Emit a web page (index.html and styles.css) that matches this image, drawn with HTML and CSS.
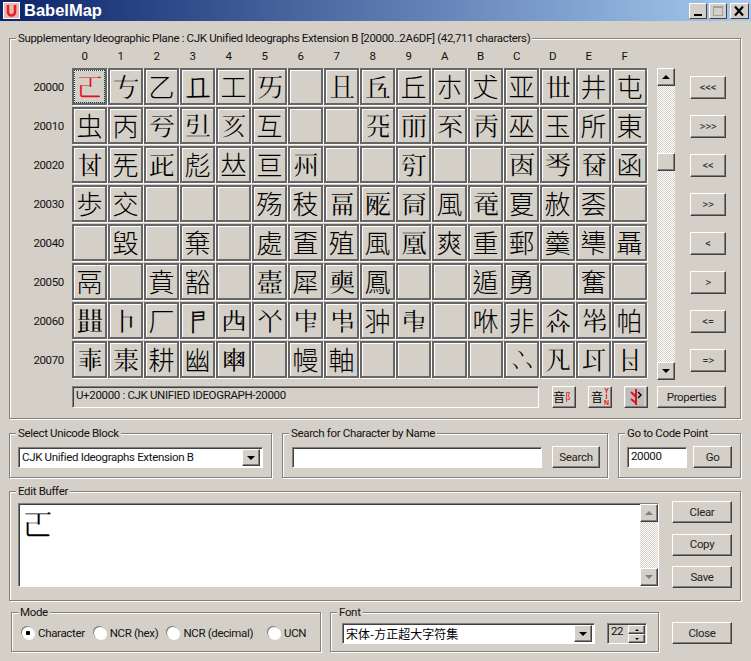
FILE: index.html
```html
<!DOCTYPE html>
<html lang="en">
<head>
<meta charset="utf-8">
<title>BabelMap</title>
<link rel="stylesheet" href="styles.css">
</head>
<body>
<div class="window">
  <header class="titlebar">
    <svg class="app-icon" viewBox="0 0 17 17"><rect x=".5" y=".5" width="16" height="16" fill="#e8b8b0" stroke="#fff"/><path d="M5 3v7a3.5 3.5 0 0 0 7 0V3" fill="none" stroke="#e0202a" stroke-width="2.6"/></svg>
    <span class="app-name">BabelMap</span>
    <div class="caption-buttons">
      <span class="cap-btn"><svg viewBox="0 0 18 16"><rect x="5" y="11" width="8" height="2" fill="#000"/></svg></span>
      <span class="cap-btn"><svg viewBox="0 0 18 16"><rect x="4.5" y="3.5" width="9" height="9" fill="none" stroke="#a0a0a0"/><rect x="5" y="4" width="8" height="1" fill="#a0a0a0"/></svg></span>
      <span class="cap-btn cap-close"><svg viewBox="0 0 18 16"><path d="M5 3.5l8 9M13 3.5l-8 9" stroke="#000" stroke-width="2.2"/></svg></span>
    </div>
  </header>

  <main class="content">
    <section class="group plane">
      <span class="group-title">Supplementary Ideographic Plane : CJK Unified Ideographs Extension B [20000..2A6DF] (42,711 characters)</span>
      <div class="plane-main">
        <div class="map">
          <span></span><span class="col">0</span><span class="col">1</span><span class="col">2</span><span class="col">3</span><span class="col">4</span><span class="col">5</span><span class="col">6</span><span class="col">7</span><span class="col">8</span><span class="col">9</span><span class="col">A</span><span class="col">B</span><span class="col">C</span><span class="col">D</span><span class="col">E</span><span class="col">F</span>

          <span class="row-label">20000</span>
          <div class="cell selected">&#x20000;</div><div class="cell">&#x20001;</div><div class="cell">乙</div><div class="cell">&#x20003;</div><div class="cell">工</div><div class="cell">&#x20005;</div><div class="cell"></div><div class="cell">&#x20007;</div><div class="cell">&#x20008;</div><div class="cell">丘</div><div class="cell">朩</div><div class="cell">&#x2000B;</div><div class="cell">亚</div><div class="cell">&#x2000D;</div><div class="cell">井</div><div class="cell">屯</div>

          <span class="row-label">20010</span>
          <div class="cell">虫</div><div class="cell">丙</div><div class="cell">&#x20012;</div><div class="cell">&#x20013;</div><div class="cell">&#x20014;</div><div class="cell">互</div><div class="cell"></div><div class="cell"></div><div class="cell">&#x20018;</div><div class="cell">&#x20019;</div><div class="cell">&#x2001A;</div><div class="cell">&#x2001B;</div><div class="cell">巫</div><div class="cell">玉</div><div class="cell">所</div><div class="cell">東</div>

          <span class="row-label">20020</span>
          <div class="cell">&#x20020;</div><div class="cell">&#x20021;</div><div class="cell">&#x20022;</div><div class="cell">彪</div><div class="cell">&#x20024;</div><div class="cell">亘</div><div class="cell">&#x20026;</div><div class="cell"></div><div class="cell"></div><div class="cell">&#x20029;</div><div class="cell"></div><div class="cell"></div><div class="cell">&#x2002C;</div><div class="cell">&#x2002D;</div><div class="cell">&#x2002E;</div><div class="cell">函</div>

          <span class="row-label">20030</span>
          <div class="cell">歩</div><div class="cell">交</div><div class="cell"></div><div class="cell"></div><div class="cell"></div><div class="cell">殇</div><div class="cell">秓</div><div class="cell">&#x20037;</div><div class="cell">&#x20038;</div><div class="cell">&#x20039;</div><div class="cell">風</div><div class="cell">&#x2003B;</div><div class="cell">夏</div><div class="cell">赦</div><div class="cell">&#x2003E;</div><div class="cell"></div>

          <span class="row-label">20040</span>
          <div class="cell"></div><div class="cell">毀</div><div class="cell"></div><div class="cell">棄</div><div class="cell"></div><div class="cell">處</div><div class="cell">&#x20046;</div><div class="cell">殖</div><div class="cell">風</div><div class="cell">&#x20049;</div><div class="cell">爽</div><div class="cell">重</div><div class="cell">郵</div><div class="cell">羹</div><div class="cell">&#x2004E;</div><div class="cell">聶</div>

          <span class="row-label">20050</span>
          <div class="cell">鬲</div><div class="cell"></div><div class="cell">賁</div><div class="cell">豁</div><div class="cell"></div><div class="cell">&#x20055;</div><div class="cell">犀</div><div class="cell">&#x20057;</div><div class="cell">鳳</div><div class="cell"></div><div class="cell"></div><div class="cell">遁</div><div class="cell">勇</div><div class="cell"></div><div class="cell">奮</div><div class="cell"></div>

          <span class="row-label">20060</span>
          <div class="cell">&#x20060;</div><div class="cell">&#x20061;</div><div class="cell">厂</div><div class="cell">&#x20063;</div><div class="cell">&#x20064;</div><div class="cell">&#x20065;</div><div class="cell">&#x20066;</div><div class="cell">&#x20067;</div><div class="cell">&#x20068;</div><div class="cell">&#x20069;</div><div class="cell"></div><div class="cell">咻</div><div class="cell">非</div><div class="cell">&#x2006D;</div><div class="cell">&#x2006E;</div><div class="cell">帕</div>

          <span class="row-label">20070</span>
          <div class="cell">&#x20070;</div><div class="cell">&#x20071;</div><div class="cell">耕</div><div class="cell">幽</div><div class="cell">&#x20074;</div><div class="cell"></div><div class="cell">幔</div><div class="cell">軸</div><div class="cell"></div><div class="cell"></div><div class="cell"></div><div class="cell"></div><div class="cell">&#x2007C;</div><div class="cell">&#x2007D;</div><div class="cell">&#x2007E;</div><div class="cell">&#x2007F;</div>
        </div>

        <div class="scrollbar map-scroll">
          <button class="btn scroll-btn"><i class="tri-up"></i></button>
          <div class="track"><button class="btn thumb"></button></div>
          <button class="btn scroll-btn"><i class="tri-down"></i></button>
        </div>

        <nav class="nav-buttons">
          <button class="btn nav">&lt;&lt;&lt;</button>
          <button class="btn nav">&gt;&gt;&gt;</button>
          <button class="btn nav">&lt;&lt;</button>
          <button class="btn nav">&gt;&gt;</button>
          <button class="btn nav">&lt;</button>
          <button class="btn nav">&gt;</button>
          <button class="btn nav">&lt;=</button>
          <button class="btn nav">=&gt;</button>
        </nav>
      </div>

      <div class="plane-status">
        <div class="status-box">U+20000 : CJK UNIFIED IDEOGRAPH-20000</div>
        <button class="btn icon-btn cjk-btn">音<b>阝</b></button>
        <button class="btn icon-btn cjk-btn">音<b class="yin">Y<br>I<br>N</b></button>
        <button class="btn icon-btn pressed"><svg viewBox="0 0 20 20"><rect x="1" y="1" width="18" height="18" fill="#bdbdbd"/><path d="M11 2v16M11 10L6 5M11 16L6 12" fill="none" stroke="#e01020" stroke-width="2"/><path d="M13 5l3 3-3 3" fill="none" stroke="#000" stroke-width="1.4"/></svg></button>
        <button class="btn properties">Properties</button>
      </div>
    </section>

    <div class="row row-search">
      <section class="group block-group">
        <span class="group-title">Select Unicode Block</span>
        <div class="combo block-combo"><span>CJK Unified Ideographs Extension B</span><button class="btn combo-btn"><i class="tri-down"></i></button></div>
      </section>
      <section class="group search-group">
        <span class="group-title">Search for Character by Name</span>
        <div class="fields search-fields"><div class="field search-field"></div><button class="btn search-btn">Search</button></div>
      </section>
      <section class="group goto-group">
        <span class="group-title">Go to Code Point</span>
        <div class="fields goto-fields"><div class="field goto-field">20000</div><button class="btn go-btn">Go</button></div>
      </section>
    </div>

    <section class="group edit-group">
      <span class="group-title">Edit Buffer</span>
      <div class="edit-body">
        <div class="edit-area">
          <div class="edit-text">&#x20000;</div>
          <div class="scrollbar edit-scroll">
            <button class="btn scroll-btn"><i class="tri-up muted"></i></button>
            <div class="track"></div>
            <button class="btn scroll-btn"><i class="tri-down muted"></i></button>
          </div>
        </div>
        <div class="edit-buttons">
          <button class="btn wide">Clear</button>
          <button class="btn wide">Copy</button>
          <button class="btn wide">Save</button>
        </div>
      </div>
    </section>

    <div class="row row-bottom">
      <section class="group mode-group">
        <span class="group-title">Mode</span>
        <div class="radios">
          <label class="radio on"><i></i>Character</label>
          <label class="radio"><i></i>NCR (hex)</label>
          <label class="radio"><i></i>NCR (decimal)</label>
          <label class="radio last"><i></i>UCN</label>
        </div>
      </section>
      <section class="group font-group">
        <span class="group-title">Font</span>
        <div class="fields font-fields">
          <div class="combo font-combo"><span class="cjk-label">宋体-方正超大字符集</span><button class="btn combo-btn"><i class="tri-down"></i></button></div>
          <div class="spin"><span>22</span><div class="spin-btns"><button class="btn spin-btn"><i class="tri-up tiny"></i></button><button class="btn spin-btn"><i class="tri-down tiny"></i></button></div></div>
        </div>
      </section>
      <button class="btn wide close-btn">Close</button>
    </div>
  </main>
</div>
</body>
</html>
```
FILE: styles.css
```css
* { box-sizing: border-box; }
html, body { margin: 0; padding: 0; }
body { background: #d4d0c8; }

.window {
  width: 751px;
  height: 661px;
  overflow: hidden;
  background: #d4d0c8;
  color: #111;
  font: 11.5px/13px Roboto, "Liberation Sans", sans-serif;
  letter-spacing: -0.34px;
}

/* title bar */
.titlebar {
  height: 21px;
  display: flex;
  align-items: center;
  padding: 0 2px 0 3px;
  background: linear-gradient(90deg, #0a246a, #a6caf0);
}
.app-icon { width: 17px; height: 17px; }
.app-name {
  margin-left: 4px;
  color: #fff;
  font: bold 16.5px/21px "Liberation Sans", sans-serif;
  letter-spacing: 0;
}
.caption-buttons { margin-left: auto; display: flex; gap: 2px; }
.cap-btn {
  width: 18px;
  height: 16px;
  background: #d4d0c8;
  border: 1px solid;
  border-color: #fff #404040 #404040 #fff;
  display: block;
}
.cap-btn svg { display: block; width: 18px; height: 16px; margin: -1px; }
.cap-close { width: 19px; margin-left: 1px; }

/* layout */
.content { padding: 17px 0 0 9px; }
.row { display: flex; }
.row-search { gap: 10px; margin-top: 14px; }
.row-bottom { margin-top: 11px; margin-left: 2px; }

.group {
  border: 1px solid #808080;
  box-shadow: inset 1px 1px 0 #fff, 1px 1px 0 #fff;
}
.group-title {
  display: block;
  width: fit-content;
  height: 13px;
  margin: -7px 0 0 6px;
  padding: 0 2px;
  background: #d4d0c8;
  white-space: nowrap;
}

/* buttons */
.btn {
  display: block;
  padding: 0;
  margin: 0;
  font: inherit;
  letter-spacing: inherit;
  color: #222;
  background: #d4d0c8;
  border: 1px solid;
  border-color: #fff #404040 #404040 #fff;
  box-shadow: inset -1px -1px 0 #808080;
}

/* arrows */
.tri-up, .tri-down {
  display: block;
  width: 0;
  height: 0;
  margin: 0 auto;
  border-left: 4px solid transparent;
  border-right: 4px solid transparent;
}
.tri-up { border-bottom: 4px solid #000; }
.tri-down { border-top: 4px solid #000; }
.tri-up.muted { border-bottom-color: #808080; }
.tri-down.muted { border-top-color: #808080; }
.tiny { border-left-width: 2px; border-right-width: 2px; }
.tri-up.tiny { border-bottom-width: 2px; }
.tri-down.tiny { border-top-width: 2px; }

/* character map */
.plane { width: 732px; height: 381px; }
.plane-main { display: flex; align-items: flex-start; }
.map {
  margin-top: 5px;
  display: grid;
  grid-template-columns: 61px repeat(16, 35px);
  grid-template-rows: 16px repeat(8, 37px);
  column-gap: 1px;
  row-gap: 2px;
}
.col { padding-right: 10px; text-align: center; }
.row-label { padding: 1px 7px 0 0; text-align: right; line-height: 37px; }
.cell {
  border: 2px solid #666;
  box-shadow: inset 1px 1px 0 #fff, 1px 1px 0 #fff;
  color: #000;
  font: 300 26px/31px "Noto Sans CJK TC", "Noto Sans CJK JP", sans-serif;
  letter-spacing: 0;
  text-align: center;
  overflow: hidden;
}
.selected { color: #e01020; outline: 1px dotted #004040; outline-offset: -3px; }

.scrollbar { display: flex; flex-direction: column; }
.map-scroll { width: 18px; height: 312px; margin: 23px 0 0 10px; }
.track {
  flex: 1;
  background: repeating-conic-gradient(#d4d0c8 0 25%, #fff 0 50%) 0 0 / 2px 2px;
}
.scroll-btn { width: 18px; height: 18px; flex: none; }
.thumb { width: 18px; height: 18px; margin-top: 67px; }
.nav-buttons {
  width: 36px;
  margin: 31px 0 0 15px;
  display: flex;
  flex-direction: column;
  gap: 16px;
}
.nav { width: 36px; height: 23px; color: #333; }

.plane-status {
  margin: 6px 0 0 62px;
  display: flex;
  height: 22px;
}
.status-box {
  width: 467px;
  padding: 2px 0 0 3px;
  border: 1px solid;
  border-color: #808080 #fff #fff #808080;
  box-shadow: inset 1px 1px 0 #404040;
  margin-right: 13px;
}
.icon-btn { width: 24px; margin-right: 12px; }
.cjk-btn {
  display: flex;
  align-items: center;
  justify-content: center;
  color: #000;
  font: 12px/20px "Noto Sans CJK SC", sans-serif;
  letter-spacing: 0;
}
.cjk-btn b { font-weight: 400; color: #e01020; font-size: 10px; }
.cjk-btn .yin {
  font: 700 7px/6px "Liberation Sans", sans-serif;
  margin-left: 1px;
  text-align: center;
}
.pressed svg { display: block; width: 20px; height: 20px; }
.properties { width: 69px; margin-left: -3px; }

/* search row */
.block-group { width: 263px; height: 45px; }
.search-group { width: 326px; height: 45px; }
.goto-group { width: 123px; height: 45px; }
.combo {
  height: 21px;
  margin-top: 7px;
  display: flex;
  align-items: center;
  justify-content: space-between;
  padding: 0 2px 0 3px;
  background: #fff;
  border: 1px solid;
  border-color: #808080 #fff #fff #808080;
  box-shadow: inset 1px 1px 0 #404040;
}
.block-combo { width: 245px; margin-left: 8px; }
.combo-btn { width: 18px; height: 17px; flex: none; }
.fields { display: flex; align-items: flex-start; margin-top: 6px; }
.search-fields { margin-left: 9px; }
.goto-fields { margin-left: 8px; }
.field {
  height: 21px;
  margin-top: 1px;
  background: #fff;
  border: 1px solid;
  border-color: #808080 #fff #fff #808080;
  box-shadow: inset 1px 1px 0 #404040;
  padding: 2px 0 0 3px;
}
.search-field { width: 250px; }
.search-btn { width: 48px; height: 22px; margin-left: 10px; }
.goto-field { width: 60px; }
.go-btn { width: 39px; height: 22px; margin-left: 6px; }

/* edit buffer */
.edit-group { width: 732px; height: 110px; margin-top: 13px; }
.edit-body { display: flex; align-items: flex-start; padding-left: 8px; }
.edit-area {
  width: 641px;
  height: 84px;
  margin-top: 5px;
  display: flex;
  justify-content: space-between;
  background: #fff;
  border: 1px solid;
  border-color: #808080 #fff #fff #808080;
  box-shadow: inset 1px 1px 0 #404040;
}
.edit-text {
  padding: 1px 0 0 4px;
  color: #000;
  font: 300 30px/36px "Noto Sans CJK TC", "Noto Sans CJK JP", sans-serif;
  letter-spacing: 0;
}
.edit-scroll { width: 18px; }
.edit-buttons {
  margin: 3px 0 0 13px;
  display: flex;
  flex-direction: column;
  gap: 10.5px;
}
.wide { width: 60px; height: 22px; }

/* bottom row */
.mode-group { width: 310px; height: 40px; }
.radios { display: flex; gap: 9px; margin: 6px 0 0 10px; }
.radio { display: flex; align-items: center; gap: 4px; height: 16px; }
.radio.last { margin-left: 6px; }
.radio i {
  display: block;
  width: 12px;
  height: 12px;
  border-radius: 50%;
  background: #fff;
  box-shadow: -1px -1px 0 #808080, 1px 1px 0 #fff;
}
.radio.on i { background: radial-gradient(circle, #000 0 2px, #fff 2.5px); }
.font-group { width: 329px; height: 40px; margin-left: 9px; }
.font-fields { margin: 4px 0 0 11px; }
.font-combo { width: 253px; margin-top: 0; }
.cjk-label { font: 12px/16px "Noto Sans CJK SC", sans-serif; letter-spacing: 0; color: #000; }
.spin {
  width: 40px;
  height: 21px;
  margin-left: 12px;
  display: flex;
  justify-content: space-between;
  padding: 1px 1px 0 3px;
  border: 1px solid;
  border-color: #808080 #fff #fff #808080;
  box-shadow: inset 1px 1px 0 #404040;
}
.spin-btns { width: 17px; display: flex; flex-direction: column; }
.spin-btn { width: 17px; height: 9px; }
.close-btn { margin: 10px 0 0 13px; }
```
